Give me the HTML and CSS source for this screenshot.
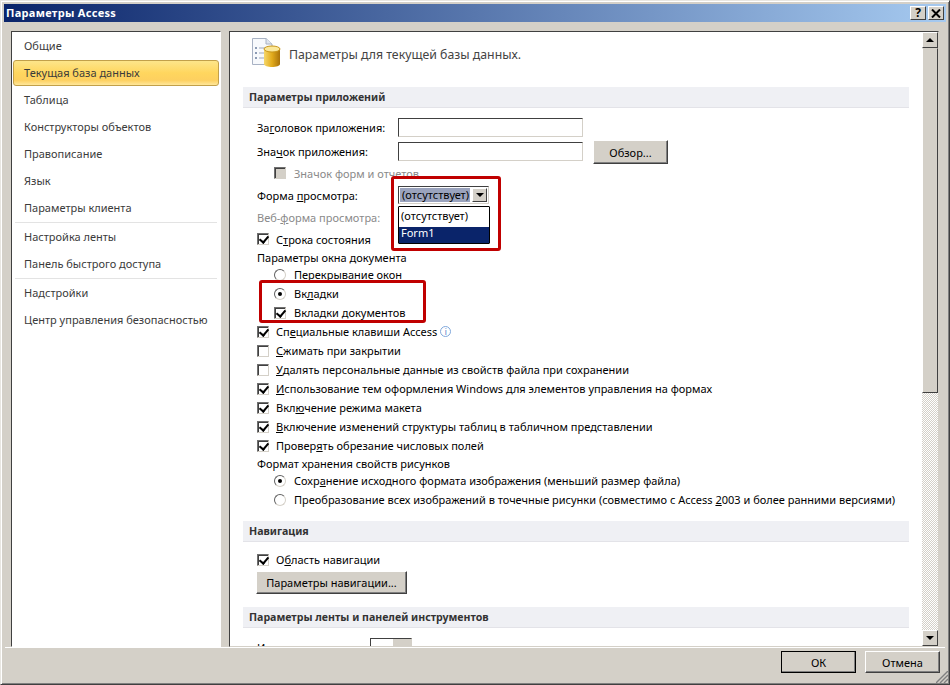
FILE: index.html
```html
<!DOCTYPE html>
<html>
<head>
  <meta charset="UTF-8">
  <title>Параметры Access</title>
  <link rel="stylesheet" href="styles.css">
</head>
<body>
  <div class="window">
    <div class="titlebar">
      <span class="title">Параметры Access</span>
      <span class="capbtn">?</span>
      <span class="capbtn close">
        <svg width="10" height="9" viewBox="0 0 10 9"><path d="M1 0.5 L9 8.5 M9 0.5 L1 8.5" stroke="#000" stroke-width="2" fill="none"/></svg>
      </span>
    </div>
    <div class="main">
      <ul class="nav">
        <li>Общие</li>
        <li class="active">Текущая база данных</li>
        <li>Таблица</li>
        <li>Конструкторы объектов</li>
        <li>Правописание</li>
        <li>Язык</li>
        <li>Параметры клиента</li>
        <li class="sep"></li>
        <li>Настройка ленты</li>
        <li>Панель быстрого доступа</li>
        <li class="sep"></li>
        <li>Надстройки</li>
        <li>Центр управления безопасностью</li>
      </ul>
      <div class="pane">
        <div class="content">
          <div class="heading">
            <svg width="30" height="31" viewBox="0 0 30 31">
              <defs>
                <linearGradient id="gold" x1="0" x2="1" y1="0" y2="0">
                  <stop offset="0" stop-color="#f6d76a"/>
                  <stop offset="0.5" stop-color="#e2ab1c"/>
                  <stop offset="1" stop-color="#a9720a"/>
                </linearGradient>
              </defs>
              <path d="M1.5 1.5 H15 L21 7 V27.5 H1.5 Z" fill="#f7f9fc" stroke="#a8b2c4"/>
              <path d="M15 1.5 V7 H21" fill="#dfe5ee" stroke="#a8b2c4"/>
              <path d="M4 10h2v2h-2z M4 15h2v2h-2z M4 20h2v2h-2z" fill="#8b9ab4"/>
              <path d="M8 11h6 M8 16h6 M8 21h6" stroke="#9aa7bd"/>
              <path d="M13 12 V27 C13 31 29 31 29 27 V12 Z" fill="url(#gold)"/>
              <ellipse cx="21" cy="12" rx="8" ry="3" fill="#fbe89a" stroke="#c8961a"/>
            </svg>
            <span>Параметры для текущей базы данных.</span>
          </div>

          <div class="section first">Параметры приложений</div>

          <div class="row field first-field">
            <label>За<u>г</u>оловок приложения:</label>
            <span class="textbox"></span>
          </div>
          <div class="row field browse-row">
            <label>Зна<u>ч</u>ок приложения:</label>
            <span class="textbox"></span>
            <span class="btn browse">Обзор...</span>
          </div>
          <div class="row h22 sub disabled"><i class="check off"></i>Значок форм и отчетов</div>
          <div class="row h22 field"><label>Форма <u>п</u>росмотра:</label><span class="combo"><span class="combo-value">(отсутствует)</span><span class="combo-btn"></span></span></div>
          <div class="row h22 field disabled"><label>Веб-<u>ф</u>орма просмотра:</label></div>
          <div class="row h22"><i class="check on"></i>С<u>т</u>рока состояния</div>
          <div class="row h15 plain">Параметры окна документа</div>
          <div class="row sub"><i class="radio"></i>Перекрывание окон</div>
          <div class="row sub"><i class="radio on"></i>Вк<u>л</u>адки</div>
          <div class="row sub"><i class="check on"></i>Вкладки документов</div>
          <div class="row"><i class="check on"></i>Сп<u>е</u>циальные клавиши Access<i class="info">i</i></div>
          <div class="row"><i class="check"></i><u>С</u>жимать при закрытии</div>
          <div class="row"><i class="check"></i><u>У</u>далять персональные данные из свойств файла при сохранении</div>
          <div class="row"><i class="check on"></i><u>И</u>спользование тем оформления Windows для элементов управления на формах</div>
          <div class="row"><i class="check on"></i>Вкл<u>ю</u>чение режима макета</div>
          <div class="row"><i class="check on"></i><u>В</u>ключение изменений структуры таблиц в табличном представлении</div>
          <div class="row"><i class="check on"></i>Провер<u>я</u>ть обрезание числовых полей</div>
          <div class="row h16 plain">Формат хранения свойств рисунков</div>
          <div class="row sub"><i class="radio on"></i><span>Сохр<u>а</u>нение исходного формата изображения (меньший размер файла)</span></div>
          <div class="row sub"><i class="radio"></i><span>Преобразование всех изображений в точечные рисунки (совместимо с Access <u>2</u>003 и более ранними версиями)</span></div>

          <div class="section nav-section">Навигация</div>
          <div class="row nav-check"><i class="check on"></i>О<u>б</u>ласть навигации</div>
          <div class="btn-row"><span class="btn">Параметры навигации...</span></div>

          <div class="section">Параметры ленты и панелей инструментов</div>
          <div class="row field last-row"><label class="short">Имя ленты:</label><span class="mini-combo"><span class="mini-btn"></span></span></div>

          <div class="dropdown">
            <div class="plain-item">(отсутствует)</div>
            <div class="selected">Form1</div>
          </div>
          <div class="mark mark-combo"></div>
          <div class="mark mark-tabs"></div>
        </div>
        <div class="scrollbar">
          <span class="arrow up"></span>
          <span class="thumb"></span>
          <span class="track"></span>
          <span class="arrow down"></span>
        </div>
      </div>
    </div>
    <div class="footer">
      <span class="btn dlg default">ОК</span>
      <span class="btn dlg">Отмена</span>
      <svg class="grip" width="12" height="12" viewBox="0 0 12 12"><path d="M0 12 L12 0 M4 12 L12 4 M8 12 L12 8" stroke="#808080" stroke-width="1.4"/></svg>
    </div>
  </div>
</body>
</html>
```

FILE: styles.css
```css
* { box-sizing: border-box; }
html, body { margin: 0; height: 100%; }
body { font-family: "Noto Sans", Tahoma, sans-serif; font-size: 11px; color: #000; background: #d4d0c8; }
i { font-style: normal; }
u { text-underline-offset: 1px; }

.window { width: 950px; height: 685px; padding: 3px 4px 4px; background: #d4d0c8; border: 1px solid; border-color: #e8e6e1 #404040 #404040 #e8e6e1; box-shadow: inset 1px 1px 0 #fff, inset -1px -1px 0 #808080; display: flex; flex-direction: column; }

.titlebar { height: 18px; margin: 0 -1px; padding: 0 2px; display: flex; align-items: center; gap: 2px; background: linear-gradient(to right, #0a246a, #a6caf0); flex: none; }
.title { flex: 1; color: #fff; font-weight: 700; font-size: 11px; letter-spacing: .3px; margin-top: -2px; }
.capbtn { width: 16px; height: 14px; background: #d4d0c8; border: 1px solid; border-color: #fff #404040 #404040 #fff; font-weight: 700; font-size: 12px; line-height: 12px; text-align: center; display: flex; align-items: center; justify-content: center; }

.main { flex: none; height: 625px; display: flex; gap: 8px; padding: 9px 7px 0 6px; }

.nav { list-style: none; margin: 0; padding: 0 1px; width: 210px; height: 616px; background: #fff; border: 1px solid; border-color: #404040 #fff #fff #404040; color: #3b3b3b; flex: none; }
.nav li { height: 27px; line-height: 25px; padding-left: 10px; border: 1px solid transparent; }
.nav li.active { height: 26px; line-height: 24px; margin-top: 1px; border: 1px solid #c2a04a; border-radius: 3px; background: linear-gradient(to bottom, #fde58a, #ffd65e 50%, #fdd060 80%, #ffe79a); }
.nav li.sep { height: 1px; margin: 1px 2px 0; padding: 0; border: 0; background: #e3e3e3; }

.pane { width: 710px; height: 616px; position: relative; background: #fff; border: 1px solid; border-color: #404040 #d4d0c8 #d4d0c8 #404040; display: flex; }
.content { width: 692px; height: 614px; position: relative; overflow: hidden; padding: 0 0 0 13px; flex: none; }

.heading { height: 55px; padding: 5px 0 0 8px; display: flex; align-items: flex-start; gap: 8px; font-size: 12.3px; color: #444; }
.heading span { margin-top: 9px; }

.section { width: 666px; height: 21px; line-height: 21px; padding-left: 6px; font-weight: 700; font-size: 10.6px; color: #333; background: #eff0f4; border-bottom: 1px solid #e3e3e8; margin-top: 13px; }
.section.first { margin-top: 0; }
.section.nav-section { margin-top: 12px; }

.row { height: 19px; padding-left: 14px; display: flex; align-items: center; white-space: nowrap; }
.row.h22 { height: 22px; }
.row.h16 { height: 16px; }
.row.h15 { height: 15px; }
.row.sub { padding-left: 31px; }
.row.plain { padding-left: 14px; }
.disabled { color: #8a8a8a; }

.field label { width: 141px; flex: none; }
.field label.short { width: 113px; }
.first-field { height: 24px; margin-top: 7px; }
.browse-row { height: 24px; margin-bottom: -1px; }

.textbox { width: 185px; height: 19px; background: #fff; border: 1px solid; border-color: #404040 #d4d0c8 #d4d0c8 #404040; }

.btn { background: #d4d0c8; border: 1px solid; border-color: #fff #404040 #404040 #fff; box-shadow: inset -1px -1px 0 #808080; display: inline-flex; align-items: center; justify-content: center; }
.browse { width: 75px; height: 24px; margin: 2px 0 0 10px; }

.check { width: 12px; height: 12px; margin-right: 7px; flex: none; position: relative; background: #fff; border: 1px solid; border-color: #707070 #d4d0c8 #d4d0c8 #707070; box-shadow: inset 1px 1px 0 #404040; }
.check.on::after { content: ""; position: absolute; left: 3px; top: 0; width: 4px; height: 7px; border: solid #000; border-width: 0 2px 2px 0; transform: rotate(40deg); }
.check.off { background: #d4d0c8; margin-right: 8px; }
.sub .check { margin-right: 8px; }

.radio { width: 12px; height: 12px; margin-right: 8px; flex: none; border-radius: 50%; background: #fff; border: 1px solid; border-color: #606060 #d4d0c8 #d4d0c8 #606060; position: relative; }
.radio.on::after { content: ""; position: absolute; left: 3px; top: 3px; width: 4px; height: 4px; border-radius: 50%; background: #000; }

.info { width: 11px; height: 11px; margin-left: 3px; border: 1px solid #7fa8dc; border-radius: 50%; color: #3b78c4; font-size: 8px; line-height: 9px; text-align: center; }

.combo { width: 91px; height: 18px; padding: 1px; display: flex; gap: 2px; background: #fff; border: 1px solid; border-color: #404040 #d4d0c8 #d4d0c8 #404040; }
.combo-value { background: #9aa3bd; color: #000; flex: 1; line-height: 14px; padding-left: 2px; white-space: nowrap; overflow: hidden; }
.combo-btn { width: 15px; background: #d4d0c8; border: 1px solid; border-color: #fff #404040 #404040 #fff; position: relative; }
.combo-btn::after, .arrow::after { content: ""; position: absolute; left: 50%; top: 50%; margin: -2px 0 0 -4px; border: 4px solid transparent; border-top-color: #000; border-bottom: 0; }

.dropdown { position: absolute; left: 168px; top: 174px; width: 92px; height: 38px; background: #fff; border: 1px solid #000; border-radius: 1px; }
.dropdown div { padding-left: 2px; }
.dropdown .plain-item { height: 20px; line-height: 17px; }
.dropdown .selected { height: 16px; line-height: 12px; background: #0a246a; color: #fff; }

.mark { position: absolute; border: 3px solid #c00000; border-radius: 3px; }
.mark-combo { left: 161px; top: 144px; width: 110px; height: 75px; }
.mark-tabs { left: 29px; top: 248px; width: 167px; height: 43px; }

.nav-check { margin-top: 8px; }
.btn-row { padding: 2px 0 0 13px; height: 25px; }
.btn-row .btn { width: 151px; height: 23px; }

.last-row { margin-top: 10px; }
.mini-combo { width: 42px; height: 20px; flex: none; display: flex; justify-content: flex-end; background: #fff; border: 1px solid; border-color: #404040 #d4d0c8 #d4d0c8 #404040; }
.mini-btn { width: 18px; background: #d4d0c8; }

.scrollbar { width: 16px; height: 614px; display: flex; flex-direction: column; background: #d4d0c8; }
.arrow { height: 16px; flex: none; position: relative; background: #d4d0c8; border: 1px solid; border-color: #fff #404040 #404040 #fff; }
.arrow.up::after { border: 4px solid transparent; border-top: 0; border-bottom-color: #000; }
.thumb { height: 345px; flex: none; background: #d4d0c8; border: 1px solid; border-color: #d4d0c8 #404040 #404040 #fff; }
.track { flex: 1; background: repeating-conic-gradient(#fff 0 25%, #d4d0c8 0 50%) 0 0/2px 2px; }

.footer { flex: 1; min-height: 0; position: relative; display: flex; justify-content: flex-end; gap: 9px; padding: 3px 5px 0 0; border-top: 1px solid #fff; }
.dlg { width: 75px; height: 22px; }
.dlg.default { outline: 1px solid #000; outline-offset: -1px; }
.grip { position: absolute; right: -3px; bottom: -3px; }
```
